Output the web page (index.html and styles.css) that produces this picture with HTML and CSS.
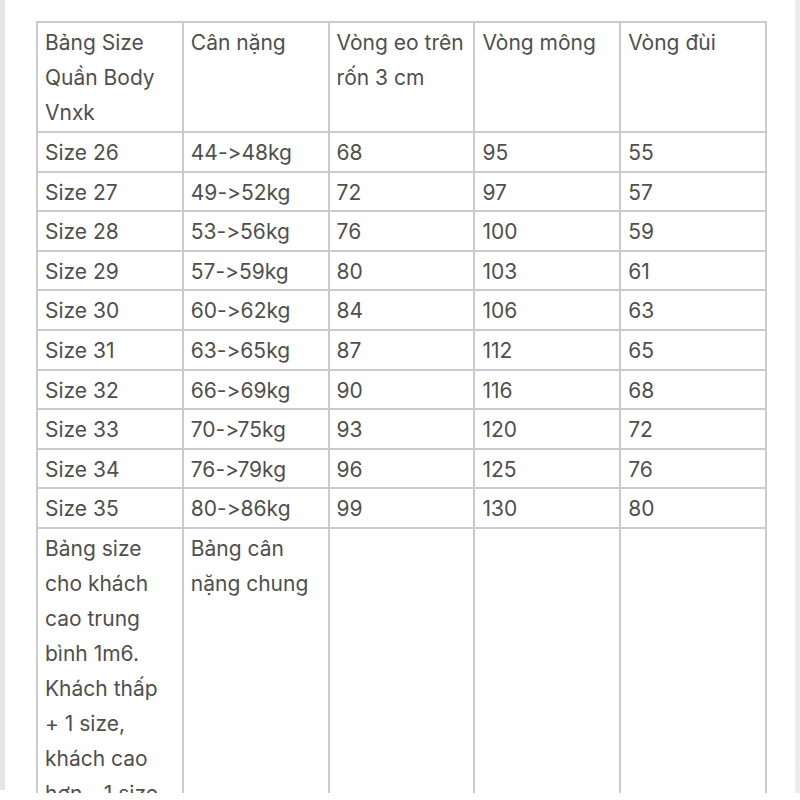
FILE: index.html
```html
<!DOCTYPE html>
<html lang="vi">
<head>
<meta charset="utf-8">
<link rel="stylesheet" href="styles.css">
</head>
<body>
<div class="page">
  <div class="side side-left"></div>
  <div class="content">
    <table class="size-table">
      <colgroup>
        <col class="c"><col class="c"><col class="c"><col class="c"><col class="c">
      </colgroup>
      <tr class="head">
        <td>Bảng Size<br>Quần Body<br>Vnxk</td>
        <td>Cân nặng</td>
        <td>Vòng eo trên<br>rốn 3 cm</td>
        <td>Vòng mông</td>
        <td>Vòng đùi</td>
      </tr>
      <tr><td>Size 26</td><td>44-&gt;48kg</td><td>68</td><td>95</td><td>55</td></tr>
      <tr><td>Size 27</td><td>49-&gt;52kg</td><td>72</td><td>97</td><td>57</td></tr>
      <tr><td>Size 28</td><td>53-&gt;56kg</td><td>76</td><td>100</td><td>59</td></tr>
      <tr><td>Size 29</td><td>57-&gt;59kg</td><td>80</td><td>103</td><td>61</td></tr>
      <tr><td>Size 30</td><td>60-&gt;62kg</td><td>84</td><td>106</td><td>63</td></tr>
      <tr><td>Size 31</td><td>63-&gt;65kg</td><td>87</td><td>112</td><td>65</td></tr>
      <tr><td>Size 32</td><td>66-&gt;69kg</td><td>90</td><td>116</td><td>68</td></tr>
      <tr><td>Size 33</td><td>70-&gt;75kg</td><td>93</td><td>120</td><td>72</td></tr>
      <tr><td>Size 34</td><td>76-&gt;79kg</td><td>96</td><td>125</td><td>76</td></tr>
      <tr><td>Size 35</td><td>80-&gt;86kg</td><td>99</td><td>130</td><td>80</td></tr>
      <tr class="note">
        <td>Bảng size<br>cho khách<br>cao trung<br>bình 1m6.<br>Khách thấp<br>+ 1 size,<br>khách cao<br>hơn - 1 size</td>
        <td>Bảng cân<br>nặng chung</td>
        <td></td><td></td><td></td>
      </tr>
    </table>
  </div>
  <div class="side side-right"></div>
</div>
</body>
</html>
```

FILE: styles.css
```css
html, body {
  margin: 0;
  padding: 0;
  background: #ffffff;
}

.page {
  display: flex;
  width: 800px;
  height: 793px;
  overflow: hidden;
  background: #ffffff;
}

.side-left {
  width: 5px;
  height: 790px;
  background: #e6e6e6;
  flex: none;
}

.side-right {
  width: 6px;
  margin-left: auto;
  background: linear-gradient(to right, #ffffff, #e9e9e9 40%, #efefef);
  flex: none;
}

.content {
  padding-left: 31px;
  padding-top: 21px;
  flex: none;
}

.size-table {
  border-collapse: collapse;
  table-layout: fixed;
  width: 729px;
  font-family: "Inter", "Liberation Sans", sans-serif;
  font-size: 21px;
  font-variant-ligatures: none;
  font-feature-settings: "liga" 0, "calt" 0;
  color: #4f4f4f;
}

.size-table .c {
  width: 145.8px;
}

.size-table td {
  border: 2px solid #cbcbcb;
  padding: 2px 7px 0.6px;
  line-height: 35px;
  vertical-align: top;
  text-align: left;
  white-space: nowrap;
}

.head td {
  padding-bottom: 1px;
}

.note td {
  height: 400px;
}
```
